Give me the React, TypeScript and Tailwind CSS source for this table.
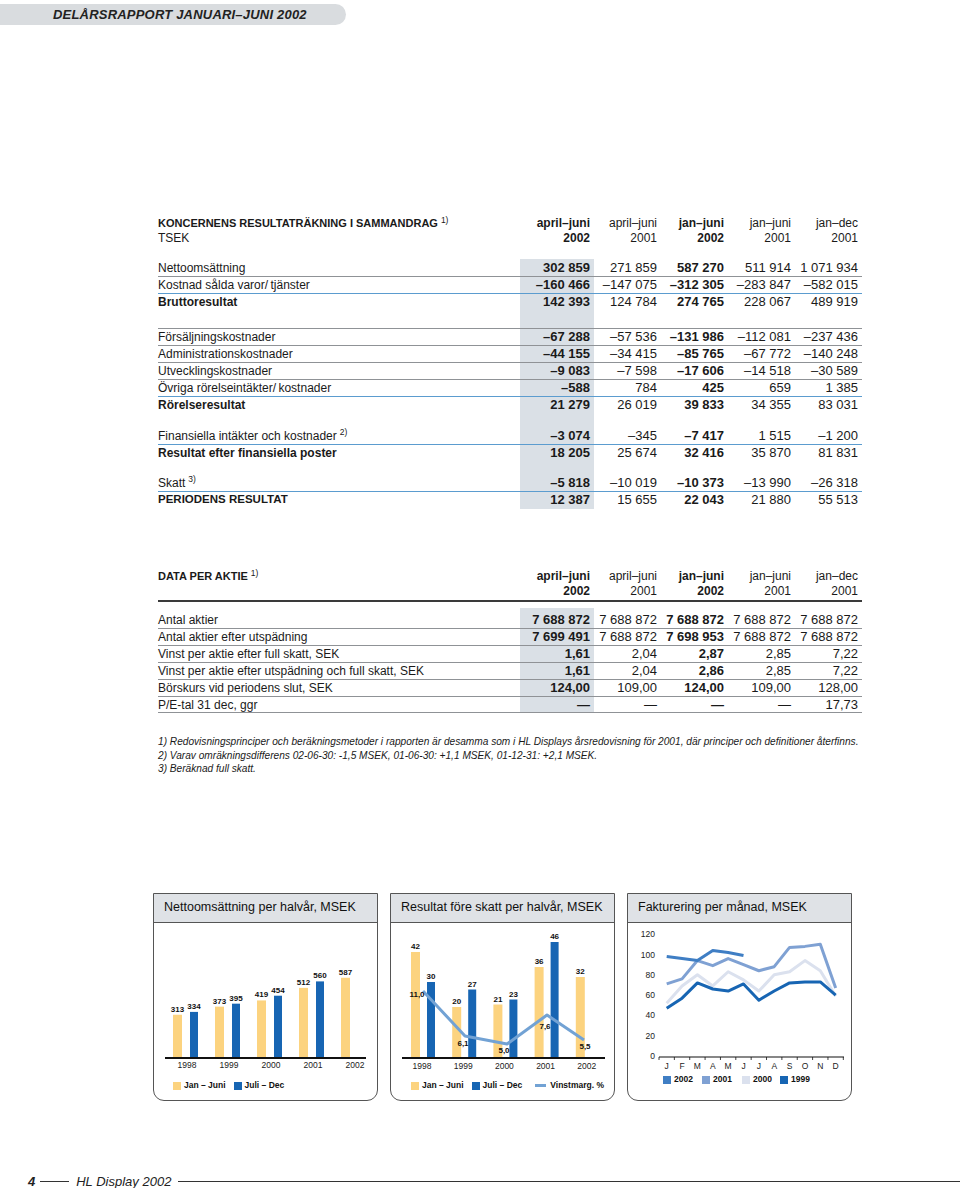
import React from 'react';

type Line = 'none' | 'gray' | 'blue';
type Row = { label: string; sup?: string; total?: boolean; caps?: boolean; line: Line; vals: string[] };

const incomeSections: Row[][] = [
  [
    { label: 'Nettoomsättning', line: 'none', vals: ['302 859', '271 859', '587 270', '511 914', '1 071 934'] },
    { label: 'Kostnad sålda varor/\u2009tjänster', line: 'gray', vals: ['–160 466', '–147 075', '–312 305', '–283 847', '–582 015'] },
    { label: 'Bruttoresultat', total: true, line: 'blue', vals: ['142 393', '124 784', '274 765', '228 067', '489 919'] },
  ],
  [
    { label: 'Försäljningskostnader', line: 'gray', vals: ['–67 288', '–57 536', '–131 986', '–112 081', '–237 436'] },
    { label: 'Administrationskostnader', line: 'gray', vals: ['–44 155', '–34 415', '–85 765', '–67 772', '–140 248'] },
    { label: 'Utvecklingskostnader', line: 'gray', vals: ['–9 083', '–7 598', '–17 606', '–14 518', '–30 589'] },
    { label: 'Övriga rörelseintäkter/\u2009kostnader', line: 'gray', vals: ['–588', '784', '425', '659', '1 385'] },
    { label: 'Rörelseresultat', total: true, line: 'blue', vals: ['21 279', '26 019', '39 833', '34 355', '83 031'] },
  ],
  [
    { label: 'Finansiella intäkter och kostnader', sup: '2)', line: 'none', vals: ['–3 074', '–345', '–7 417', '1 515', '–1 200'] },
    { label: 'Resultat efter finansiella poster', total: true, line: 'blue', vals: ['18 205', '25 674', '32 416', '35 870', '81 831'] },
  ],
  [
    { label: 'Skatt', sup: '3)', line: 'none', vals: ['–5 818', '–10 019', '–10 373', '–13 990', '–26 318'] },
    { label: 'PERIODENS RESULTAT', total: true, caps: true, line: 'blue', vals: ['12 387', '15 655', '22 043', '21 880', '55 513'] },
  ],
];

const sectionGaps = [18, 14, 13, 1];

const shareRows: Row[] = [
  { label: 'Antal aktier', line: 'none', vals: ['7 688 872', '7 688 872', '7 688 872', '7 688 872', '7 688 872'] },
  { label: 'Antal aktier efter utspädning', line: 'gray', vals: ['7 699 491', '7 688 872', '7 698 953', '7 688 872', '7 688 872'] },
  { label: 'Vinst per aktie efter full skatt, SEK', line: 'gray', vals: ['1,61', '2,04', '2,87', '2,85', '7,22'] },
  { label: 'Vinst per aktie efter utspädning och full skatt, SEK', line: 'gray', vals: ['1,61', '2,04', '2,86', '2,85', '7,22'] },
  { label: 'Börskurs vid periodens slut, SEK', line: 'gray', vals: ['124,00', '109,00', '124,00', '109,00', '128,00'] },
  { label: 'P/E-tal 31 dec, ggr', line: 'gray', vals: ['—', '—', '—', '—', '17,73'] },
];

const salesData = [
  { year: '1998', h1: 313, h2: 334 },
  { year: '1999', h1: 373, h2: 395 },
  { year: '2000', h1: 419, h2: 454 },
  { year: '2001', h1: 512, h2: 560 },
  { year: '2002', h1: 587 },
];

const profitData = [
  { year: '1998', h1: 42, h2: 30 },
  { year: '1999', h1: 20, h2: 27 },
  { year: '2000', h1: 21, h2: 23 },
  { year: '2001', h1: 36, h2: 46 },
  { year: '2002', h1: 32 },
];

const margin = [
  { x: 32, y: 68, label: '11,0', lx: 26, ly: 74 },
  { x: 74, y: 113, label: '6,1', lx: 72, ly: 123 },
  { x: 116, y: 121, label: '5,0', lx: 113, ly: 130 },
  { x: 156, y: 92, label: '7,6', lx: 154, ly: 106 },
  { x: 193, y: 117, label: '5,5', lx: 194, ly: 126 },
];

const monthly = [
  { year: '2000', color: '#dbe1ee', vals: [52, 69, 80, 69, 83, 75, 64, 80, 83, 94, 84, 59] },
  { year: '1999', color: '#1765b3', vals: [47, 57, 72, 66, 64, 71, 55, 64, 72, 73, 73, 60] },
  { year: '2001', color: '#7fa1d3', vals: [71, 76, 94, 89, 96, 90, 84, 88, 107, 108, 110, 67] },
  { year: '2002', color: '#3f7ec4', vals: [98, 96, 94, 104, 102, 99] },
];

const YELLOW = '#fcd37f';
const BLUE = '#1765b3';

function Sup({ children }: { children: React.ReactNode }) {
  return <sup className="text-[8.5px] font-normal ml-[3px] relative -top-[4px]">{children}</sup>;
}

function HeadRows({ title, sup, sub }: { title: string; sup: string; sub?: string }) {
  return (
    <>
      <div className="flex h-[14px] items-center">
        <div className="flex-1 font-bold text-[11px]">
          {title}
          <Sup>{sup}</Sup>
        </div>
        <div className="w-[74px] pr-[4px] text-right font-bold">april–juni</div>
        <div className="w-[67px] pr-[4px] text-right">april–juni</div>
        <div className="w-[67px] pr-[4px] text-right font-bold">jan–juni</div>
        <div className="w-[67px] pr-[4px] text-right">jan–juni</div>
        <div className="w-[67px] pr-[4px] text-right">jan–dec</div>
      </div>
      <div className="flex h-[15px] items-center">
        <div className="flex-1">{sub}</div>
        <div className="w-[74px] pr-[4px] text-right font-bold">2002</div>
        <div className="w-[67px] pr-[4px] text-right">2001</div>
        <div className="w-[67px] pr-[4px] text-right font-bold">2002</div>
        <div className="w-[67px] pr-[4px] text-right">2001</div>
        <div className="w-[67px] pr-[4px] text-right">2001</div>
      </div>
    </>
  );
}

function DataRow({ row, last }: { row: Row; last?: boolean }) {
  const border =
    row.line === 'gray' ? 'border-t border-[#8f9296]' : row.line === 'blue' ? 'border-t border-[#5b9ccf]' : '';
  return (
    <div className={`flex h-[17px] ${border} ${last ? 'border-b border-[#8f9296]' : ''}`}>
      <div className={`flex-1 flex items-center ${row.total ? 'font-bold' : ''} ${row.caps ? 'text-[11.5px]' : ''}`}>
        {row.label}
        {row.sup && <Sup>{row.sup}</Sup>}
      </div>
      <div className="w-[74px] bg-[#dae0e6] pr-[4px] flex items-center justify-end font-bold text-[13px]">{row.vals[0]}</div>
      <div className="w-[67px] pr-[4px] flex items-center justify-end text-[13px]">{row.vals[1]}</div>
      <div className="w-[67px] pr-[4px] flex items-center justify-end font-bold text-[13px]">{row.vals[2]}</div>
      <div className="w-[67px] pr-[4px] flex items-center justify-end text-[13px]">{row.vals[3]}</div>
      <div className="w-[67px] pr-[4px] flex items-center justify-end text-[13px]">{row.vals[4]}</div>
    </div>
  );
}

function Spacer({ h }: { h: number }) {
  return (
    <div className="flex" style={{ height: h }}>
      <div className="flex-1" />
      <div className="w-[74px] bg-[#dae0e6]" />
      <div className="w-[268px]" />
    </div>
  );
}

function ChartBox({ title, children }: { title: string; children: React.ReactNode }) {
  return (
    <div className="w-[225px] h-[208px] border border-[#555] rounded-b-[11px] flex flex-col bg-white">
      <div className="h-[29px] bg-[#dfe2e6] border-b border-[#555] flex items-center px-[10px] text-[12.5px] text-[#111]">
        {title}
      </div>
      {children}
    </div>
  );
}

function SalesChart() {
  const s = 0.135;
  return (
    <svg width="223" height="156" className="block">
      {salesData.map((d, i) => {
        const yx = 19 + 42 * i;
        const bx = 36 + 42 * i;
        return (
          <g key={d.year}>
            <rect x={yx} y={134 - d.h1 * s} width="9" height={d.h1 * s} fill={YELLOW} />
            <text x={yx + 4.5} y={131 - d.h1 * s} fontSize="8" fontWeight="bold" textAnchor="middle" fill="#111">
              {d.h1}
            </text>
            {d.h2 && (
              <>
                <rect x={bx} y={134 - d.h2 * s} width="8" height={d.h2 * s} fill={BLUE} />
                <text x={bx + 4} y={131 - d.h2 * s} fontSize="8" fontWeight="bold" textAnchor="middle" fill="#111">
                  {d.h2}
                </text>
              </>
            )}
            <text x={33 + 42 * i} y="145" fontSize="8.5" textAnchor="middle" fill="#222">
              {d.year}
            </text>
          </g>
        );
      })}
      <line x1="11" y1="135" x2="212" y2="135" stroke="#111" strokeWidth="2" />
    </svg>
  );
}

function ProfitChart() {
  const s = 2.5;
  return (
    <svg width="223" height="156" className="block">
      {profitData.map((d, i) => {
        const yx = 20 + 41.2 * i;
        const bx = 36 + 41.2 * i;
        return (
          <g key={d.year}>
            <rect x={yx} y={134 - d.h1 * s} width="9" height={d.h1 * s} fill={YELLOW} />
            <text x={yx + 4.5} y={131 - d.h1 * s} fontSize="8" fontWeight="bold" textAnchor="middle" fill="#111">
              {d.h1}
            </text>
            {d.h2 && (
              <>
                <rect x={bx} y={134 - d.h2 * s} width="8" height={d.h2 * s} fill={BLUE} />
                <text x={bx + 4} y={131 - d.h2 * s} fontSize="8" fontWeight="bold" textAnchor="middle" fill="#111">
                  {d.h2}
                </text>
              </>
            )}
            <text x={31 + 41.2 * i} y="146" fontSize="8.5" textAnchor="middle" fill="#222">
              {d.year}
            </text>
          </g>
        );
      })}
      <polyline
        points={margin.map((p) => `${p.x},${p.y}`).join(' ')}
        fill="none"
        stroke="#72a2d4"
        strokeWidth="3"
        strokeLinejoin="round"
      />
      {margin.map((p) => (
        <text key={p.label} x={p.lx} y={p.ly} fontSize="8" fontWeight="bold" textAnchor="middle" fill="#111">
          {p.label}
        </text>
      ))}
      <line x1="11" y1="135" x2="214" y2="135" stroke="#111" strokeWidth="2" />
    </svg>
  );
}

function MonthlyChart() {
  const months = ['J', 'F', 'M', 'A', 'M', 'J', 'J', 'A', 'S', 'O', 'N', 'D'];
  const px = (i: number) => 38.7 + i * 15.36;
  const py = (v: number) => 133 - v * 1.015;
  return (
    <svg width="223" height="150" className="block">
      {[0, 20, 40, 60, 80, 100, 120].map((v) => (
        <text key={v} x="27" y={py(v) + 3} fontSize="8.5" textAnchor="end" fill="#222">
          {v}
        </text>
      ))}
      {monthly.map((m) => (
        <polyline
          key={m.year}
          points={m.vals.map((v, i) => `${px(i)},${py(v)}`).join(' ')}
          fill="none"
          stroke={m.color}
          strokeWidth="3"
          strokeLinejoin="round"
        />
      ))}
      <line x1="31" y1="134" x2="216" y2="134" stroke="#111" strokeWidth="1.2" />
      {Array.from({ length: 13 }).map((_, i) => (
        <line key={i} x1={31 + i * 15.36} y1="134" x2={31 + i * 15.36} y2="137" stroke="#111" strokeWidth="0.8" />
      ))}
      {months.map((m, i) => (
        <text key={i} x={px(i)} y="146" fontSize="8.5" textAnchor="middle" fill="#222">
          {m}
        </text>
      ))}
    </svg>
  );
}

function LegendSquare({ color }: { color: string }) {
  return <span className="inline-block w-[8px] h-[8px]" style={{ background: color }} />;
}

export default function App() {
  return (
    <div className="w-[960px] h-[1188px] bg-white text-[#1a1a1a] text-[12px] font-['Liberation_Sans',Arial,sans-serif] overflow-hidden">
      {/* Page header */}
      <div className="mt-[4px] h-[21px] w-[346px] rounded-r-[11px] bg-[#d9dcdf] flex items-center pl-[53px]">
        <span className="font-bold italic text-[13px] tracking-[0.2px] text-[#222]">DELÅRSRAPPORT JANUARI–JUNI 2002</span>
      </div>

      {/* Resultaträkning */}
      <div className="ml-[158px] w-[704px] mt-[191px]">
        <HeadRows title="KONCERNENS RESULTATRÄKNING I SAMMANDRAG" sup="1)" sub="TSEK" />
        <div className="h-[14px]" />
        {incomeSections.map((section, si) => (
          <div key={si}>
            {section.map((row) => (
              <DataRow key={row.label} row={row} />
            ))}
            <Spacer h={sectionGaps[si]} />
          </div>
        ))}
      </div>

      {/* Data per aktie */}
      <div className="ml-[158px] w-[704px] mt-[60px]">
        <div className="pb-[2px] border-b-2 border-[#3a3a3a]">
          <HeadRows title="DATA PER AKTIE" sup="1)" />
        </div>
        <div className="h-[6px]" />
        <Spacer h={3} />
        {shareRows.map((row, i) => (
          <DataRow key={row.label} row={row} last={i === shareRows.length - 1} />
        ))}
      </div>

      {/* Footnotes */}
      <div className="ml-[158px] mt-[22px] text-[10.15px] italic leading-[13.5px] text-[#1a1a1a]">
        <p>1) Redovisningsprinciper och beräkningsmetoder i rapporten är desamma som i HL Displays årsredovisning för 2001, där principer och definitioner återfinns.</p>
        <p>2) Varav omräkningsdifferens 02-06-30: -1,5 MSEK, 01-06-30: +1,1 MSEK, 01-12-31: +2,1 MSEK.</p>
        <p>3) Beräknad full skatt.</p>
      </div>

      {/* Charts */}
      <div className="ml-[153px] mt-[117px] flex gap-[12px]">
        <ChartBox title="Nettoomsättning per halvår, MSEK">
          <SalesChart />
          <div className="h-[14px] flex items-center pl-[19px] text-[8.5px] font-bold text-[#111]">
            <LegendSquare color={YELLOW} />
            <span className="ml-[3px]">Jan – Juni</span>
            <span className="ml-[8px] flex">
              <LegendSquare color={BLUE} />
            </span>
            <span className="ml-[3px]">Juli – Dec</span>
          </div>
        </ChartBox>

        <ChartBox title="Resultat före skatt per halvår, MSEK">
          <ProfitChart />
          <div className="h-[14px] flex items-center pl-[20px] text-[8.5px] font-bold text-[#111]">
            <LegendSquare color={YELLOW} />
            <span className="ml-[3px]">Jan – Juni</span>
            <span className="ml-[8px] flex">
              <LegendSquare color={BLUE} />
            </span>
            <span className="ml-[3px]">Juli – Dec</span>
            <span className="ml-[13px] inline-block w-[11px] h-[3px] bg-[#72a2d4]" />
            <span className="ml-[4px]">Vinstmarg. %</span>
          </div>
        </ChartBox>

        <ChartBox title="Fakturering per månad, MSEK">
          <MonthlyChart />
          <div className="mt-[1px] h-[12px] flex items-center pl-[35px] text-[8.5px] font-bold text-[#111]">
            <LegendSquare color="#3f7ec4" />
            <span className="ml-[3px] w-[28px]">2002</span>
            <LegendSquare color="#7fa1d3" />
            <span className="ml-[3px] w-[29px]">2001</span>
            <LegendSquare color="#dbe1ee" />
            <span className="ml-[3px] w-[27px]">2000</span>
            <LegendSquare color={BLUE} />
            <span className="ml-[3px]">1999</span>
          </div>
        </ChartBox>
      </div>

      {/* Footer */}
      <div className="mt-[74px] h-[14px] flex items-center pl-[28px] italic text-[13px] text-[#222]">
        <span className="font-bold">4</span>
        <span className="ml-[5px] w-[29px] h-px bg-[#333]" />
        <span className="ml-[7px]">HL Display 2002</span>
        <span className="ml-[7px] flex-1 h-px bg-[#333]" />
      </div>
    </div>
  );
}
